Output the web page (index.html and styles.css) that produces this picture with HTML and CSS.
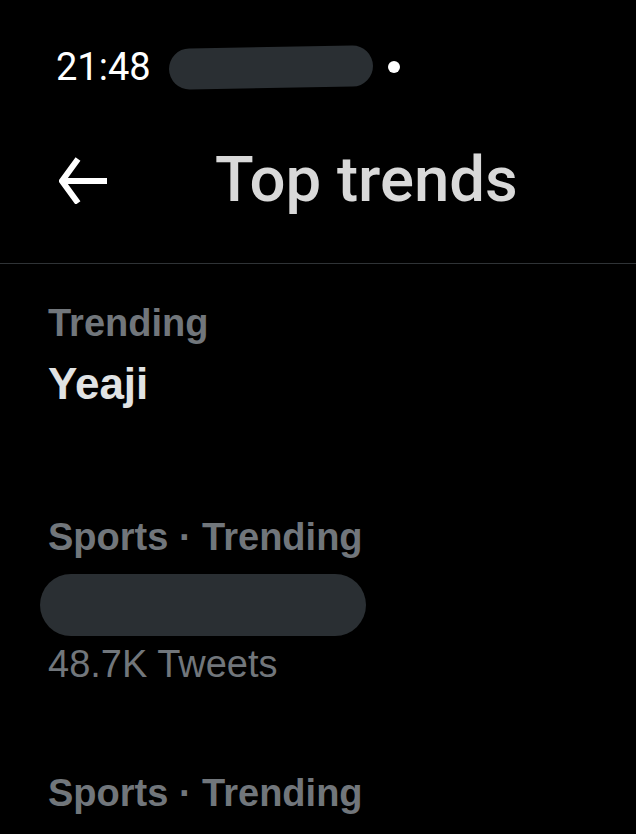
FILE: index.html
```html
<!DOCTYPE html>
<html lang="en">
<head>
  <meta charset="UTF-8" />
  <meta name="viewport" content="width=device-width, initial-scale=1.0"/>
  <title>Top trends</title>
  <link rel="stylesheet" href="styles.css">
</head>
<body>

  <!-- Status bar -->
  <div class="status-bar">
    <span class="clock">21:48</span>
    <span class="redacted redacted-status"></span>
    <span class="status-dot"></span>
  </div>

  <!-- Header -->
  <div class="header">
    <button type="button" class="back-btn" aria-label="Back">
      <svg width="48" height="48" viewBox="0 0 48 48" fill="none" stroke="#fff" stroke-width="6">
        <path d="M3 25 H48" />
        <path d="M19 3 L3 25 L19 47" stroke-linejoin="miter" />
      </svg>
    </button>
    <h1 class="title">Top trends</h1>
  </div>

  <!-- Trends list -->
  <div class="trends">
    <div class="trend trend-first">
      <div class="trend-meta">Trending</div>
      <div class="trend-name">Yeaji</div>
    </div>

    <div class="trend">
      <div class="trend-meta">Sports · Trending</div>
      <div class="redacted redacted-name"></div>
      <div class="trend-count">48.7K Tweets</div>
    </div>

    <div class="trend">
      <div class="trend-meta">Sports · Trending</div>
    </div>
  </div>

</body>
</html>
```

FILE: styles.css
```css
body {
  margin: 0;
  padding: 0;
  background: #000;
  color: #fff;
  font-family: 'Liberation Sans', Arial, sans-serif;
  overflow: hidden;
}

.status-bar {
  display: flex;
  align-items: center;
  height: 42px;
  padding: 46px 0 0 56px;
}

.clock {
  font-family: Roboto, sans-serif;
  font-size: 38px;
  color: #fff;
  line-height: 42px;
}

.redacted {
  display: block;
  background: #2a2f33;
  border-radius: 999px;
}

.redacted-status {
  width: 204px;
  height: 41px;
  margin-left: 18px;
  transform: rotate(-1deg);
}

.status-dot {
  width: 12px;
  height: 12px;
  border-radius: 50%;
  background: #fff;
  margin-left: 15px;
}

.header {
  display: flex;
  align-items: center;
  height: 88px;
  padding: 48px 0 39px 0;
  border-bottom: 1px solid #2f3336;
}

.back-btn {
  background: transparent;
  border: none;
  padding: 0;
  margin-left: 59px;
  width: 49px;
  height: 48px;
  display: flex;
  align-items: center;
  cursor: pointer;
}

.title {
  margin: 0 0 0 107px;
  font-family: Roboto, sans-serif;
  font-weight: 500;
  font-size: 63.5px;
  line-height: 72px;
  color: #d9d9d9;
}

.trends {
  padding-top: 37px;
}

.trend {
  padding: 0 48px 85px;
}

.trend-first {
  padding-bottom: 106px;
}

.trend-meta {
  font-size: 38px;
  line-height: 44px;
  font-weight: 700;
  color: #71767b;
  white-space: nowrap;
}

.trend-name {
  margin-top: 14px;
  font-size: 44px;
  line-height: 50px;
  font-weight: 700;
  color: #e1e3e4;
}

.redacted-name {
  width: 326px;
  height: 62px;
  margin: 15px 0 0 -8px;
}

.trend-count {
  margin-top: 6px;
  font-size: 38px;
  line-height: 44px;
  color: #71767b;
}
```
